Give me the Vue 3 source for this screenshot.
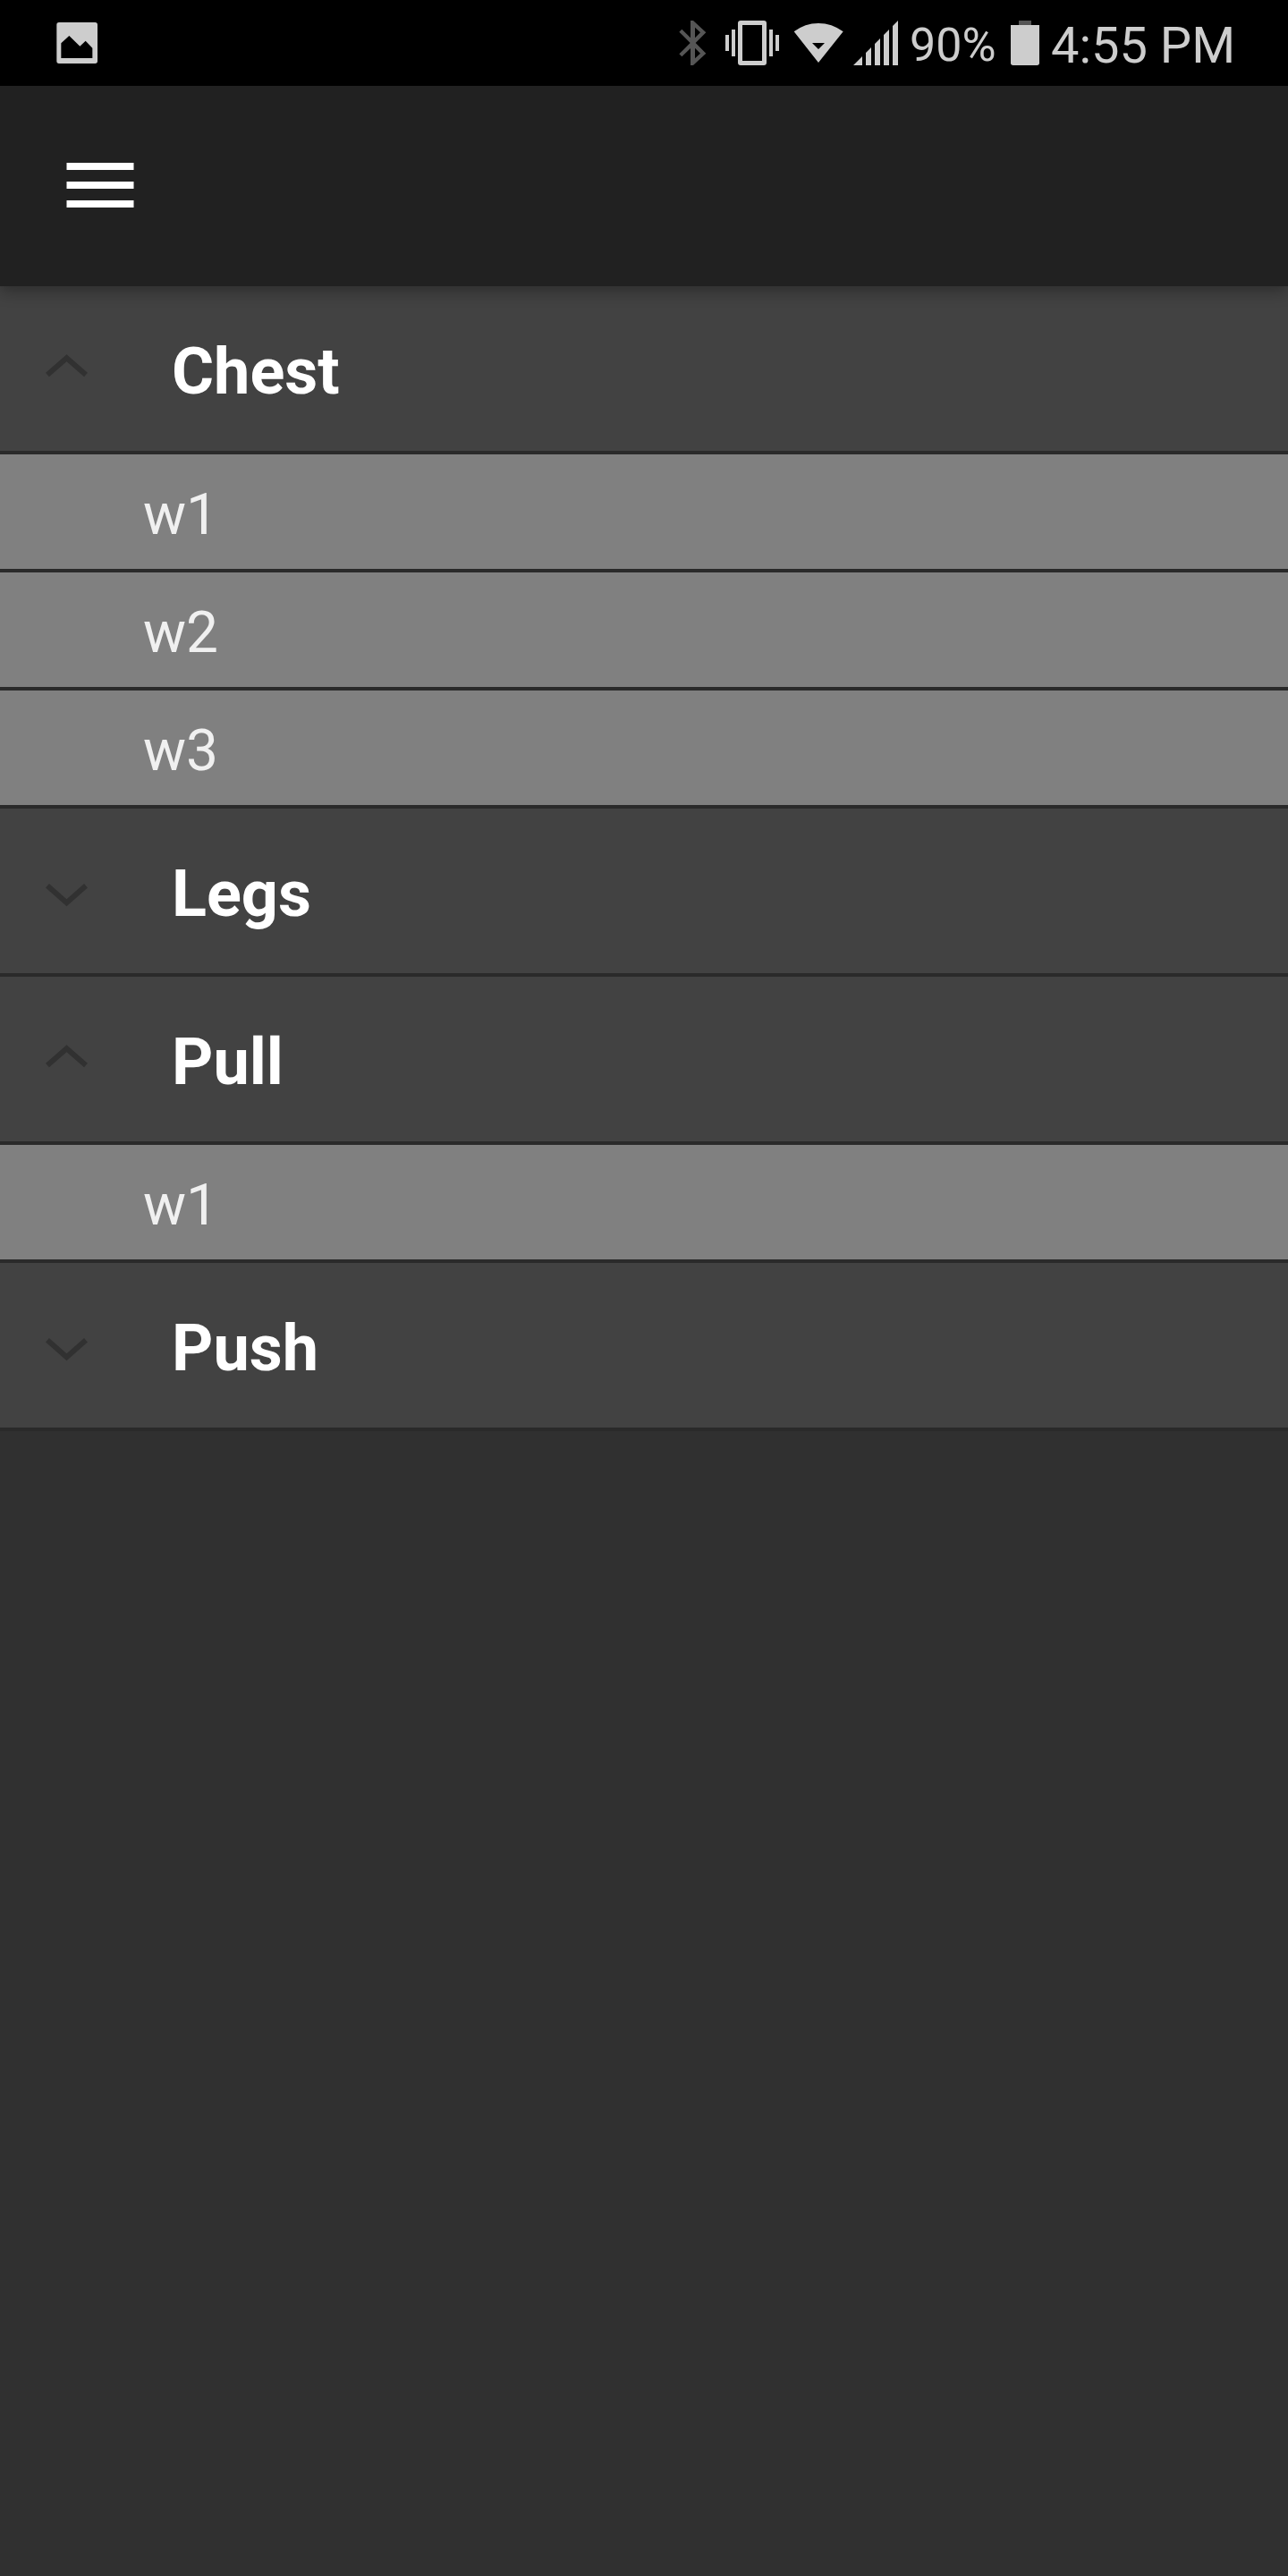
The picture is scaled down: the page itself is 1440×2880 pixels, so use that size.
<script setup>
const groups = [
  { name: 'Chest', open: true, items: ['w1', 'w2', 'w3'] },
  { name: 'Legs', open: false, items: [] },
  { name: 'Pull', open: true, items: ['w1'] },
  { name: 'Push', open: false, items: [] },
]
</script>

<template>
  <div class="screen">
    <header class="status">
      <svg class="picture" width="60" height="96" viewBox="54 0 180 288">
        <path fill="#cdcdcd" fill-rule="evenodd" d="M78 75H199Q207 75 207 83V205Q207 213 199 213H78Q70 213 70 205V83Q70 75 78 75ZM85 195H190V161L167 137L148 155L112 120L85 145Z" />
      </svg>
      <svg class="bluetooth" width="40" height="96" viewBox="45 0 120 288">
        <path fill="#555" fill-rule="evenodd" d="M96 69H105L148 109L113 144L148 179L105 219H96V162L67 190L58 181L95 144L58 107L67 98L96 127ZM111 92V127L129 109ZM111 161V196L129 179Z" />
      </svg>
      <svg class="vibrate" width="62" height="96" viewBox="210 0 186 288">
        <g fill="#cdcdcd">
          <path d="M213 117h12v54h-12zM234 99h12v90h-12zM360 99h12v90h-12zM381 117h12v54h-12z" />
          <path fill-rule="evenodd" d="M264 69H342Q351 69 351 78V210Q351 219 342 219H264Q255 219 255 210V78Q255 69 264 69ZM270 84V204H336V84Z" />
        </g>
      </svg>
      <svg class="wifi" width="56" height="96" viewBox="441 0 168 288">
        <path fill="#cdcdcd" fill-rule="evenodd" d="M443 106Q480 78 525 78Q570 78 608 106L525 210ZM504 144L525 165L546 144Z" />
      </svg>
      <svg class="signal" width="52" height="96" viewBox="639 0 156 288">
        <path fill="#cdcdcd" d="M642 219L672 189V219ZM684 219V177L702 159V219ZM714 219V147L732 129V219ZM744 219V117L762 99V219ZM774 219V87L792 69V219Z" />
      </svg>
      <span class="percent">90%</span>
      <svg class="battery" width="32" height="96" viewBox="390 0 96 288">
        <path fill="#555" d="M417 69h42v15h-42z" />
        <path fill="#cdcdcd" d="M390 84H486V211Q486 219 478 219H398Q390 219 390 211Z" />
      </svg>
      <span class="clock">4:55 PM</span>
    </header>

    <nav class="appbar">
      <svg width="76" height="50" viewBox="0 0 76 50">
        <path fill="#fff" d="M.5 0h75v8H.5zM.5 21h75v8H.5zM.5 42h75v8H.5z" />
      </svg>
    </nav>

    <main>
      <section v-for="group in groups" :key="group.name">
        <div class="group">
          <svg width="192" height="184" viewBox="0 0 576 552">
            <path :d="group.open ? 'M159 297L223.5 240.5L288 297' : 'M159 259L223.5 315.5L288 259'" fill="none" stroke="#313131" stroke-width="18" />
          </svg>
          <span>{{ group.name }}</span>
        </div>
        <div v-for="item in group.items" :key="item" class="item">{{ item }}</div>
      </section>
    </main>
  </div>
</template>

<style>
body {
  margin: 0;
  background: #303030;
}
</style>

<style scoped>
.screen {
  width: 1440px;
  height: 2880px;
  overflow: hidden;
  background: #303030;
  font-family: Roboto, sans-serif;
  color: #fff;
}
svg {
  display: block;
  flex: none;
}
.status {
  display: flex;
  height: 96px;
  background: #000;
  color: #cdcdcd;
  white-space: nowrap;
}
.picture {
  margin-left: 58px;
}
.bluetooth {
  margin-left: 637px;
}
.vibrate {
  margin-left: 15px;
}
.wifi {
  margin-left: 15px;
}
.signal {
  margin-left: 10px;
}
.percent {
  box-sizing: border-box;
  width: 113px;
  margin-left: 12px;
  font-size: 52px;
  line-height: 101px;
}
.clock {
  margin-left: 13px;
  font-size: 56px;
  line-height: 102px;
}
.appbar {
  position: relative;
  z-index: 1;
  box-sizing: border-box;
  height: 224px;
  padding: 86px 0 0 74px;
  background: #212121;
  box-shadow: 0 6px 16px rgba(0, 0, 0, 0.3);
}
.group {
  display: flex;
  height: 184px;
  background: #424242;
  border-bottom: 4px solid #2a2a2a;
  font-size: 72px;
  font-weight: 700;
  line-height: 192px;
}
.item {
  height: 128px;
  padding-left: 160px;
  background: #808080;
  border-bottom: 4px solid #2a2a2a;
  color: #f0f0f0;
  font-size: 64px;
  line-height: 136px;
}
</style>
